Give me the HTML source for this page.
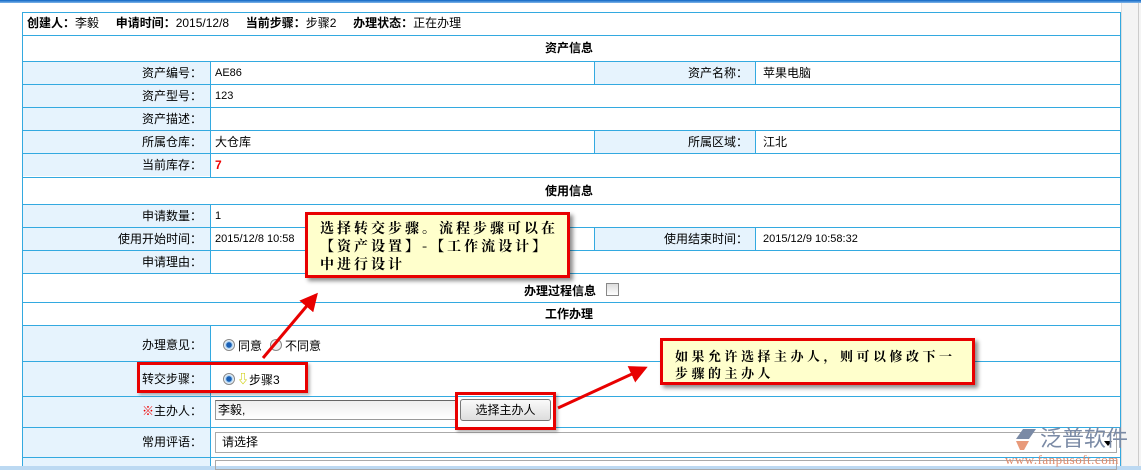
<!DOCTYPE html>
<html><head><meta charset="utf-8"><style>
body{margin:0;width:1141px;height:470px;overflow:hidden;background:#fff;font-family:"Liberation Sans","WenQuanYi Zen Hei","Noto Sans CJK SC",sans-serif;font-size:12px;color:#000;position:relative}
.a{position:absolute}
.h{position:absolute;left:22px;width:1098px;height:1px;background:#33a9e0}
.v{position:absolute;width:1px;background:#33a9e0}
.lb{position:absolute;background:#e6f3fd}
.t{position:absolute;white-space:nowrap;line-height:14px}
.r{text-align:right}
.b{font-weight:bold}
.call{position:absolute;white-space:nowrap;overflow:hidden;background:#ffffcc;border:3px solid #e80000;box-shadow:3px 3px 4px rgba(0,0,0,.45);font-family:"Noto Serif CJK SC","WenQuanYi Zen Hei",serif;font-weight:bold;font-size:14px;line-height:18px;letter-spacing:3px;box-sizing:border-box}
.box{position:absolute;border:3px solid #e80000;box-sizing:border-box;box-shadow:2px 2px 3px rgba(0,0,0,.3)}
.radio{position:absolute;width:10px;height:10px;border-radius:50%;border:1px solid #888;background:radial-gradient(circle,#1a5fb4 0 2.5px,#9cc8ee 3px,#fff 5px)}
</style></head><body>
<div class="a" style="left:0;top:0;width:1141px;height:3px;background:linear-gradient(#0d64c4,#7fb6ea)"></div>
<div class="a" style="left:1121px;top:3px;width:20px;height:467px;background:#f4f4f4;border-left:1px solid #ddd"></div>
<div class="a" style="left:1138px;top:3px;width:1px;height:467px;background:#ccc"></div>
<div class="lb" style="left:23px;top:61px;width:187px;height:115px"></div>
<div class="lb" style="left:595px;top:61px;width:160px;height:23px"></div>
<div class="lb" style="left:595px;top:130px;width:160px;height:23px"></div>
<div class="lb" style="left:23px;top:204px;width:187px;height:69px"></div>
<div class="lb" style="left:595px;top:227px;width:160px;height:23px"></div>
<div class="lb" style="left:23px;top:325px;width:187px;height:145px"></div>
<div class="h" style="top:12px"></div><div class="h" style="top:35px"></div><div class="h" style="top:61px"></div>
<div class="h" style="top:84px"></div><div class="h" style="top:107px"></div><div class="h" style="top:130px"></div>
<div class="h" style="top:153px"></div><div class="h" style="top:177px"></div><div class="h" style="top:204px"></div>
<div class="h" style="top:227px"></div><div class="h" style="top:250px"></div><div class="h" style="top:273px"></div>
<div class="h" style="top:302px"></div><div class="h" style="top:325px"></div><div class="h" style="top:361px"></div>
<div class="h" style="top:396px"></div><div class="h" style="top:427px"></div><div class="h" style="top:457px"></div>
<div class="v" style="left:22px;top:12px;height:458px"></div>
<div class="v" style="left:1120px;top:12px;height:458px"></div>
<div class="v" style="left:210px;top:61px;height:116px"></div>
<div class="v" style="left:210px;top:204px;height:69px"></div>
<div class="v" style="left:210px;top:325px;height:145px"></div>
<div class="v" style="left:594px;top:61px;height:23px"></div><div class="v" style="left:755px;top:61px;height:23px"></div>
<div class="v" style="left:594px;top:130px;height:23px"></div><div class="v" style="left:755px;top:130px;height:23px"></div>
<div class="v" style="left:594px;top:227px;height:23px"></div><div class="v" style="left:755px;top:227px;height:23px"></div>
<div class="a" style="left:0;top:466px;width:1141px;height:4px;background:#bcd9f2"></div>
<div class="t" style="left:27px;top:16px"><b>创建人：</b>李毅 &nbsp;&nbsp;&nbsp; <b>申请时间：</b>2015/12/8 &nbsp;&nbsp;&nbsp; <b>当前步骤：</b>步骤2 &nbsp;&nbsp;&nbsp; <b>办理状态：</b>正在办理</div>
<div class="t b" style="left:545px;top:41px">资产信息</div>
<div class="t r" style="left:60px;width:142px;top:66px">资产编号：</div><div class="t" style="left:215px;top:66px;font-size:11px">AE86</div>
<div class="t r" style="left:600px;width:148px;top:66px">资产名称：</div><div class="t" style="left:763px;top:66px">苹果电脑</div>
<div class="t r" style="left:60px;width:142px;top:89px">资产型号：</div><div class="t" style="left:215px;top:89px;font-size:11px">123</div>
<div class="t r" style="left:60px;width:142px;top:112px">资产描述：</div>
<div class="t r" style="left:60px;width:142px;top:135px">所属仓库：</div><div class="t" style="left:215px;top:135px">大仓库</div>
<div class="t r" style="left:600px;width:148px;top:135px">所属区域：</div><div class="t" style="left:763px;top:135px">江北</div>
<div class="t r" style="left:60px;width:142px;top:158px">当前库存：</div><div class="t b" style="left:215px;top:158px;color:#e00">7</div>
<div class="t b" style="left:545px;top:184px">使用信息</div>
<div class="t r" style="left:60px;width:142px;top:209px">申请数量：</div><div class="t" style="left:215px;top:209px;font-size:11px">1</div>
<div class="t r" style="left:60px;width:142px;top:232px">使用开始时间：</div><div class="t" style="left:215px;top:232px;font-size:11px">2015/12/8 10:58</div>
<div class="t r" style="left:600px;width:148px;top:232px">使用结束时间：</div><div class="t" style="left:763px;top:232px;font-size:11px">2015/12/9 10:58:32</div>
<div class="t r" style="left:60px;width:142px;top:255px">申请理由：</div>
<div class="t b" style="left:524px;top:284px">办理过程信息</div>
<div class="a" style="left:606px;top:283px;width:11px;height:11px;border:1px solid #888;background:linear-gradient(#ddd,#fff)"></div>
<div class="t b" style="left:545px;top:307px">工作办理</div>
<div class="t r" style="left:60px;width:142px;top:338px">办理意见：</div>
<div class="radio" style="left:223px;top:339px"></div><div class="t" style="left:238px;top:339px">同意</div>
<div class="a" style="left:270px;top:339px;width:10px;height:10px;border-radius:50%;border:1px solid #888;background:#eee"></div><div class="t" style="left:285px;top:339px">不同意</div>
<div class="t r" style="left:60px;width:142px;top:372px">转交步骤：</div>
<div class="radio" style="left:223px;top:373px"></div>
<div class="t" style="left:237px;top:372px;color:#cc0;font-weight:bold">⇩</div><div class="t" style="left:249px;top:373px">步骤3</div>
<div class="t r" style="left:60px;width:142px;top:404px"><span style="color:#e00">※</span>主办人：</div>
<div class="a" style="left:215px;top:400px;width:242px;height:20px;border:1px solid #999;border-top-color:#666;background:linear-gradient(#eee,#fff);box-sizing:border-box"></div>
<div class="t" style="left:218px;top:403px">李毅,</div>
<div class="a" style="left:460px;top:399px;width:91px;height:22px;border:1px solid #777;border-radius:3px;background:linear-gradient(#fafafa,#ddd);box-sizing:border-box;text-align:center;line-height:20px">选择主办人</div>
<div class="t r" style="left:60px;width:142px;top:435px">常用评语：</div>
<div class="a" style="left:215px;top:432px;width:902px;height:21px;border:1px solid #aaa;box-sizing:border-box"></div>
<div class="t" style="left:222px;top:435px">请选择</div>
<div class="a" style="left:1104px;top:441px;width:0;height:0;border-left:4px solid transparent;border-right:4px solid transparent;border-top:5px solid #000"></div>
<div class="a" style="left:215px;top:460px;width:902px;height:10px;border:1px solid #aaa;box-sizing:border-box"></div>
<div class="box" style="left:137px;top:362px;width:171px;height:31px"></div>
<div class="box" style="left:455px;top:392px;width:101px;height:38px"></div>
<svg class="a" style="left:0;top:0" width="1141" height="470">
<defs><marker id="m" markerWidth="6" markerHeight="6" refX="5" refY="3" orient="auto"><path d="M0,0 L6,3 L0,6 Z" fill="#e80000"/></marker></defs>
<line x1="263" y1="358" x2="316" y2="295" stroke="#e80000" stroke-width="3" marker-end="url(#m)"/>
<line x1="558" y1="408" x2="645" y2="368" stroke="#e80000" stroke-width="3" marker-end="url(#m)"/>
</svg>
<div class="call" style="left:305px;top:212px;width:265px;height:66px;padding:4px 0 0 12px;letter-spacing:3px">选择转交步骤。流程步骤可以在<br>【资产设置】-【工作流设计】<br>中进行设计</div>
<div class="call" style="left:660px;top:338px;width:315px;height:47px;padding:6px 0 0 12px;font-size:13px;line-height:17px;letter-spacing:3.5px">如果允许选择主办人，则可以修改下一<br>步骤的主办人</div>
<svg class="a" style="left:1012px;top:426px" width="28" height="26"><path d="M4,13 L11,3 L24,3 L17,13 Z" fill="#7a8aa5"/><path d="M4,15 L17,15 L12,24 L8,24 Z" fill="#e89a7a"/></svg>
<div class="t" style="left:1040px;top:426px;font-size:22px;line-height:26px;color:#7a8aa5">泛普软件</div>
<div class="t" style="left:1005px;top:453px;font-size:13px;line-height:14px;color:#e08a6a;font-family:'Liberation Serif',serif;letter-spacing:.5px">www.fanpusoft.com</div>
</body></html>
